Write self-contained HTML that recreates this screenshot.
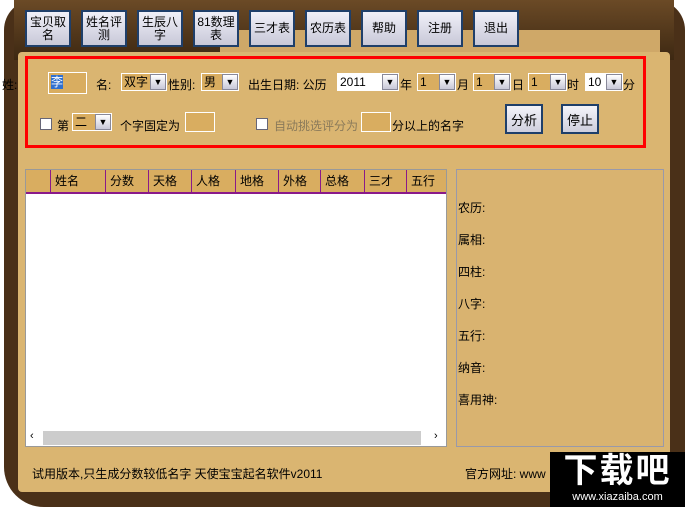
<!DOCTYPE html>
<html><head><meta charset="utf-8"><style>
*{margin:0;padding:0;box-sizing:border-box}
body{width:685px;height:507px;background:#fff;position:relative;overflow:hidden;font-family:"Liberation Sans","Noto Sans CJK SC",sans-serif;font-size:12px;color:#000}
.frame{position:absolute;left:4px;top:0;width:681px;height:507px;background:#4a3018;border-radius:30px 30px 0 40px}
.wood{position:absolute;left:14px;top:0;width:660px;height:60px;background:linear-gradient(#6b4a26,#3d2812)}
.parch{position:absolute;left:18px;top:52px;width:652px;height:440px;background:#dab571;border-radius:4px}
.topparch{position:absolute;left:220px;top:30px;width:440px;height:30px;background:#cfa868}
.btn{position:absolute;top:10px;width:46px;height:37px;background:linear-gradient(#f0f0f8,#c8c8d8);border:2px solid #1f3f6a;font-size:12px;line-height:13px;text-align:center;display:flex;align-items:center;justify-content:center}
.red{position:absolute;left:25px;top:56px;width:621px;height:92px;border:3px solid #f00}
.t{position:absolute;font-size:12px;white-space:nowrap}
.sel{position:absolute;height:18px;background:#d9ad60;border:1px solid #fff;font-size:12px;line-height:16px;padding-left:2px}
.sel b{position:absolute;right:0;top:0;width:16px;height:16px;background:linear-gradient(#fff,#c8c8d8);border:1px solid #889;font-size:9px;text-align:center;line-height:14px;font-weight:normal}
.inp{position:absolute;height:22px;background:#d9ad60;border:1px solid #fff}
.ab{position:absolute;top:104px;width:38px;height:30px;background:linear-gradient(#f4f4fa,#cfcfdd);border:2px solid #1f3f6a;display:flex;align-items:center;justify-content:center;font-size:13px}
.cb{position:absolute;width:12px;height:12px;background:#fff;border:1px solid #667}
.table{position:absolute;left:25px;top:169px;width:422px;height:278px;background:#fff;border:1px solid #999}
.hdr{position:absolute;left:0;top:0;width:420px;height:24px;background:#d9ad60;border-bottom:2px solid #8a1a8a}
.hc{position:absolute;top:0;height:22px;border-left:1px solid #8a1a8a;padding-left:4px;line-height:22px;font-size:12px}
.sb{position:absolute;left:0;top:260px;width:420px;height:16px;background:#fff}
.sb i{position:absolute;left:17px;top:1px;width:378px;height:14px;background:#ccc}
.right{position:absolute;left:456px;top:169px;width:208px;height:278px;background:#d9b370;border:1px solid #99a}
.rl{position:absolute;left:1px;font-size:12px}
.logo{position:absolute;left:550px;top:452px;width:135px;height:55px;background:#000;color:#fff;text-align:center}
</style></head><body>
<div class="frame"></div>
<div class="wood"></div>
<div class="topparch"></div>
<div class="parch"></div>
<div class="btn" style="left:25px">宝贝取<br>名</div>
<div class="btn" style="left:81px">姓名评<br>测</div>
<div class="btn" style="left:137px">生辰八<br>字</div>
<div class="btn" style="left:193px">81数理<br>表</div>
<div class="btn" style="left:249px">三才表</div>
<div class="btn" style="left:305px">农历表</div>
<div class="btn" style="left:361px">帮助</div>
<div class="btn" style="left:417px">注册</div>
<div class="btn" style="left:473px">退出</div>
<div class="red"></div>
<div class="t" style="left:2px;top:76px">姓:</div>
<div class="inp" style="left:48px;top:72px;width:39px"><span style="background:#3070d0;color:#fff;font-size:12px;margin-left:2px;line-height:18px">李</span></div>
<div class="t" style="left:96px;top:76px">名:</div>
<div class="sel" style="left:121px;top:73px;width:46px">双字<b>▼</b></div>
<div class="t" style="left:168px;top:76px">性别:</div>
<div class="sel" style="left:201px;top:73px;width:38px">男<b>▼</b></div>
<div class="t" style="left:248px;top:76px">出生日期: 公历</div>
<div class="sel" style="left:337px;top:73px;width:62px;background:#fff">2011<b>▼</b></div>
<div class="t" style="left:400px;top:76px">年</div>
<div class="sel" style="left:417px;top:73px;width:39px">1<b>▼</b></div>
<div class="t" style="left:457px;top:76px">月</div>
<div class="sel" style="left:473px;top:73px;width:38px">1<b>▼</b></div>
<div class="t" style="left:512px;top:76px">日</div>
<div class="sel" style="left:528px;top:73px;width:39px">1<b>▼</b></div>
<div class="t" style="left:567px;top:76px">时</div>
<div class="sel" style="left:585px;top:73px;width:38px;background:#fff">10<b>▼</b></div>
<div class="t" style="left:623px;top:76px">分</div>
<div class="cb" style="left:40px;top:118px"></div>
<div class="t" style="left:57px;top:117px">第</div>
<div class="sel" style="left:72px;top:113px;width:40px">二<b>▼</b></div>
<div class="t" style="left:120px;top:117px">个字固定为</div>
<div class="inp" style="left:185px;top:112px;width:30px;height:20px"></div>
<div class="cb" style="left:256px;top:118px"></div>
<div class="t" style="left:274px;top:117px;color:#8a7a5a">自动挑选评分为</div>
<div class="inp" style="left:361px;top:112px;width:30px;height:20px"></div>
<div class="t" style="left:392px;top:117px">分以上的名字</div>
<div class="ab" style="left:505px">分析</div>
<div class="ab" style="left:561px">停止</div>
<div class="table">
<div class="hdr">
<div class="hc" style="left:24px;width:55px">姓名</div>
<div class="hc" style="left:79px;width:43px">分数</div>
<div class="hc" style="left:122px;width:43px">天格</div>
<div class="hc" style="left:165px;width:44px">人格</div>
<div class="hc" style="left:209px;width:43px">地格</div>
<div class="hc" style="left:252px;width:42px">外格</div>
<div class="hc" style="left:294px;width:44px">总格</div>
<div class="hc" style="left:338px;width:42px">三才</div>
<div class="hc" style="left:380px;width:40px">五行</div>
</div>
<div class="sb"><span style="position:absolute;left:4px;top:0;font-size:11px">‹</span><i></i><span style="position:absolute;left:408px;top:0;font-size:11px">›</span></div>
</div>
<div class="right">
<div class="rl" style="top:29px">农历:</div>
<div class="rl" style="top:61px">属相:</div>
<div class="rl" style="top:93px">四柱:</div>
<div class="rl" style="top:125px">八字:</div>
<div class="rl" style="top:157px">五行:</div>
<div class="rl" style="top:189px">纳音:</div>
<div class="rl" style="top:221px">喜用神:</div>
</div>
<div class="t" style="left:32px;top:465px">试用版本,只生成分数较低名字 天使宝宝起名软件v2011</div>
<div class="t" style="left:465px;top:465px">官方网址: www</div>
<div class="logo"><div style="font-size:34px;font-weight:bold;line-height:38px;letter-spacing:2px">下载吧</div><div style="font-size:11px;line-height:14px">www.xiazaiba.com</div></div>
</body></html>
